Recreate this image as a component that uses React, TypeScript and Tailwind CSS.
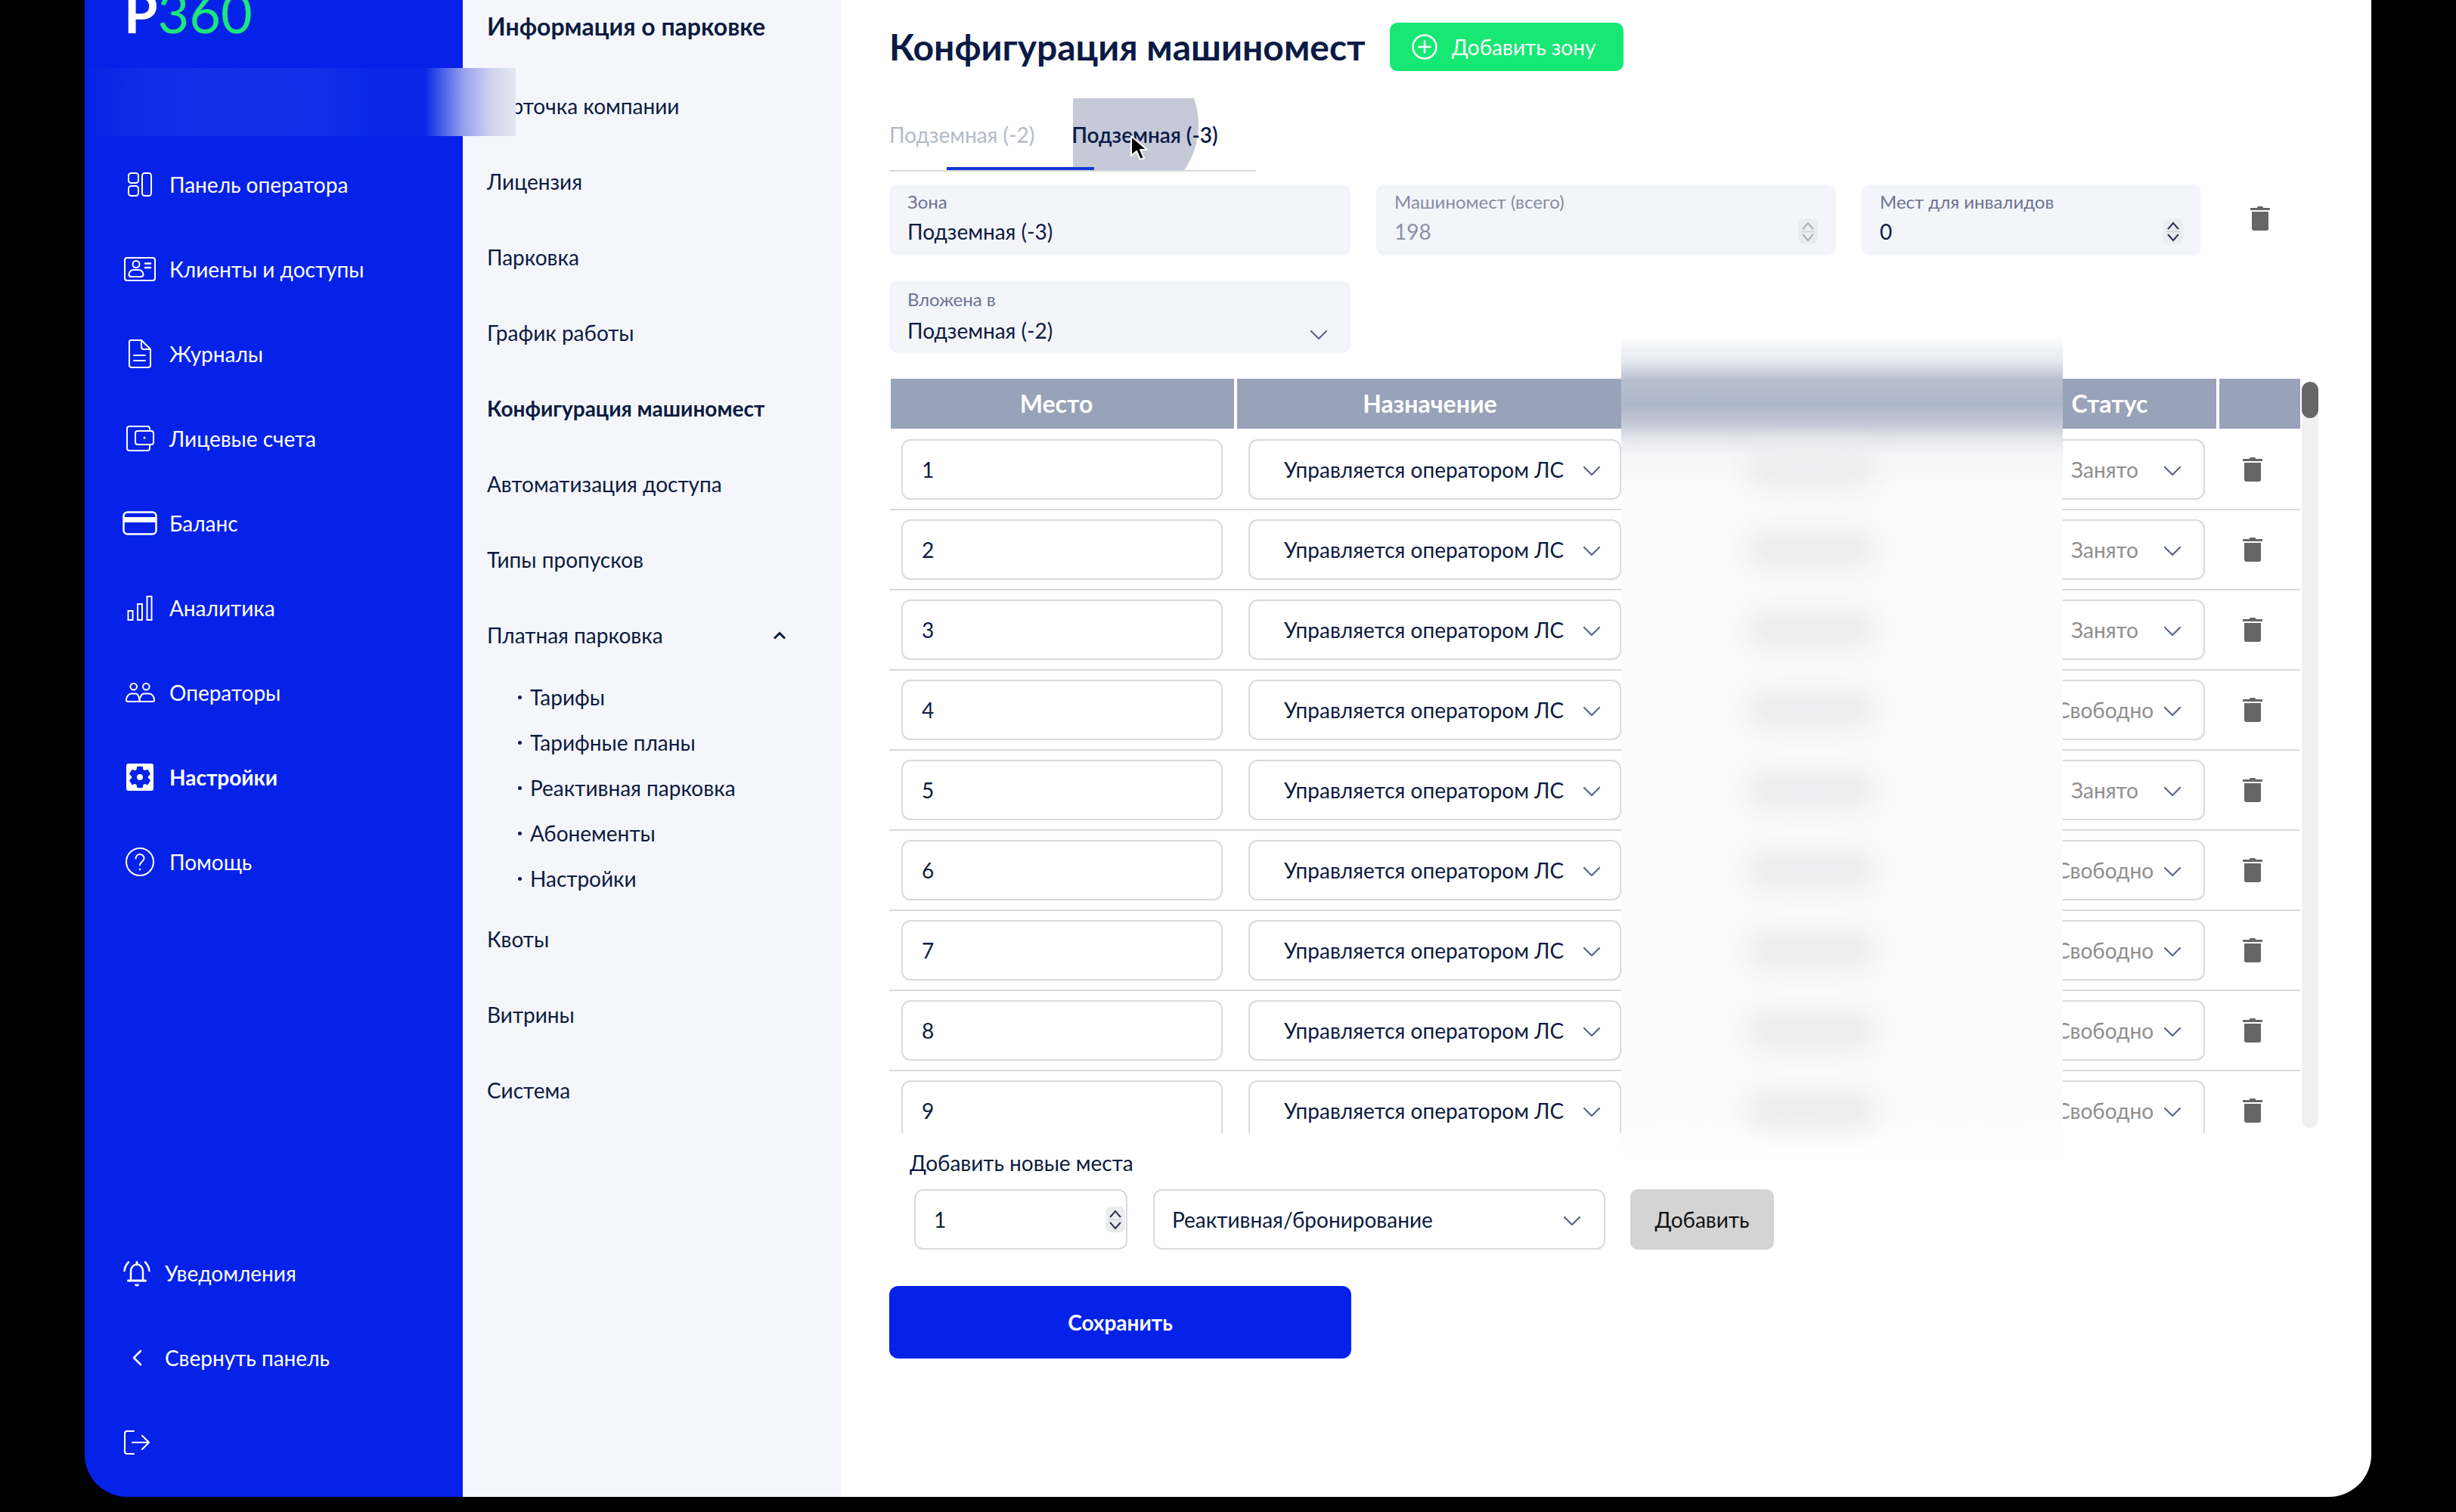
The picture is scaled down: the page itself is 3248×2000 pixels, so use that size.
import React from 'react';

// six blunt teeth, flat one on top
const gearPoints = () => {
    const pts: string[] = [];
    for (let i = 0; i < 6; i++) {
        const a = (-90 + i * 60) * (Math.PI / 180);
        const at = (r: number, d: number) => {
            const t = a + d * (Math.PI / 180);
            return `${(18 + r * Math.cos(t)).toFixed(2)},${(18 + r * Math.sin(t)).toFixed(2)}`;
        };
        pts.push(at(10, -21), at(13.5, -12), at(13.5, 12), at(10, 21));
    }
    return pts.join(' ');
};

const NavIcon = ({ name }: { name: string }) => {
    const p = { fill: 'none', stroke: 'white', strokeWidth: 2, strokeLinecap: 'round' as const, strokeLinejoin: 'round' as const };
    switch (name) {
        case 'panel':
            return (
                <svg width="32" height="32" viewBox="0 0 32 32" {...p}>
                    <rect x="1" y="1" width="13" height="13" rx="3.5" />
                    <rect x="1" y="18" width="13" height="13" rx="3.5" />
                    <rect x="19" y="1" width="12" height="30" rx="3.5" />
                </svg>
            );
        case 'clients':
            return (
                <svg width="42" height="32" viewBox="0 0 42 32" {...p}>
                    <rect x="1" y="1" width="40" height="30" rx="3" />
                    <circle cx="16" cy="9.500" r="4.500" />
                    <path d="M6.500 23c0-3.500 3-6 6-6h7c3 0 6 2.500 6 6 0 1.700-1.300 3-3 3h-13c-1.700 0-3-1.300-3-3z" />
                    <path d="M28 8.500h7M28 14h7" strokeWidth={2.500} />
                </svg>
            );
        case 'journals':
            return (
                <svg width="30" height="38" viewBox="0 0 30 38" {...p}>
                    <path d="M3 1h14l12 12v21c0 1.700-1.300 3-3 3H4c-1.700 0-3-1.300-3-3V3c0-1.100.9-2 2-2z" />
                    <path d="M17 1v9c0 1.700 1.300 3 3 3h9" />
                    <path d="M7 21h15M7 28h15" />
                </svg>
            );
        case 'accounts':
            return (
                <svg width="37" height="34" viewBox="0 0 37 34" {...p}>
                    <path d="M31 7V4c0-1.700-1.300-3-3-3H4C2.300 1 1 2.300 1 4v26c0 1.700 1.300 3 3 3h24c1.700 0 3-1.300 3-3v-5" />
                    <path d="M15 7h18c1.700 0 3 1.300 3 3v12c0 1.700-1.300 3-3 3H15c-1.700 0-3-1.300-3-3V10c0-1.700 1.300-3 3-3z" />
                    <circle cx="24" cy="16" r="1.500" fill="white" stroke="none" />
                </svg>
            );
        case 'balance':
            return (
                <svg width="46" height="32" viewBox="0 0 46 32" {...p} strokeWidth={2.5}>
                    <rect x="1.500" y="1.500" width="43" height="29" rx="5" />
                    <rect x="1.500" y="8" width="43" height="7" fill="white" stroke="none" />
                </svg>
            );
        case 'analytics':
            return (
                <svg width="34" height="33" viewBox="0 0 34 33" {...p} strokeLinejoin="miter">
                    <rect x="1.500" y="20" width="6" height="12" />
                    <rect x="14" y="11" width="6" height="21" />
                    <rect x="26.500" y="1" width="6" height="31" />
                </svg>
            );
        case 'operators':
            return (
                <svg width="39" height="26" viewBox="0 0 39 26" {...p}>
                    <circle cx="10.700" cy="5.300" r="4.300" />
                    <circle cx="27.300" cy="5.300" r="4.300" />
                    <path d="M18.500 25H3a2 2 0 0 1-2-2c0-4.500 3-8.500 7-8.500h5c3 0 5.500 4 5.500 10.500z" />
                    <path d="M18.500 25H36a2 2 0 0 0 2-2c0-4.500-3-8.500-7-8.500h-6c-3.500 0-6.500 4-6.500 10.500z" />
                </svg>
            );
        case 'settings':
            return (
                <svg width="36" height="36" viewBox="0 0 36 36">
                    <rect width="36" height="36" rx="3" fill="white" />
                    <polygon points={gearPoints()} fill="#0622E8" stroke="#0622E8" strokeWidth="2" strokeLinejoin="round" />
                    <circle cx="18" cy="18" r="4" fill="white" />
                </svg>
            );
        case 'help':
            return (
                <svg width="38" height="38" viewBox="0 0 38 38" {...p}>
                    <circle cx="19" cy="19" r="18" />
                    <path d="M13.500 14.500c0-3 2.500-5.500 5.500-5.500s5.500 2.300 5.500 5.200c0 4.300-5.500 4.800-5.500 9.300" />
                    <circle cx="19" cy="29" r="1.300" fill="white" stroke="none" />
                </svg>
            );
        case 'bell':
            return (
                <svg width="36" height="35" viewBox="0 0 36 35" {...p} strokeWidth={2.5}>
                    <path d="M10 26V14c0-4.500 3.500-8.500 8-8.500s8 4 8 8.500v12" />
                    <path d="M18 2.500v3" strokeWidth={3} />
                    <path d="M6.500 27h23" strokeWidth={3} />
                    <path d="M1.500 14c.5-5 2.500-8.500 5.500-11.500M34.500 14c-.5-5-2.500-8.500-5.500-11.500" />
                    <path d="M15 31.500h6a3 3 0 0 1-6 0z" fill="white" stroke="none" />
                </svg>
            );
        case 'back':
            return (
                <svg width="16" height="22" viewBox="0 0 16 22" {...p} strokeWidth={2.5}>
                    <path d="M13 2 4 11l9 9" />
                </svg>
            );
        case 'logout':
        default:
            return (
                <svg width="35" height="32" viewBox="0 0 35 32" {...p}>
                    <path d="M13 1H4C2.300 1 1 2.300 1 4v24c0 1.700 1.300 3 3 3h9" />
                    <path d="M11 16h22M24 7l9 9-9 9" />
                </svg>
            );
    }
};

const Chevron = ({ color = '#5B6585', w = 24 }: { color?: string; w?: number }) => (
    <svg width={w} height="14" viewBox="0 0 24 14" fill="none" stroke={color} strokeWidth="2.200" strokeLinecap="round" strokeLinejoin="round">
        <path d="M2 2l10 10L22 2" />
    </svg>
);

const Spin = ({ color }: { color: string }) => (
    <div className="flex h-[34px] w-[26px] flex-col items-center justify-center gap-[2px] rounded-[8px] bg-[#EBECF0]">
        <svg width="18" height="11" viewBox="0 0 18 11" fill="none" stroke={color} strokeWidth="2" strokeLinecap="round">
            <path d="M2.500 9.500 9 2l6.500 7.500" />
        </svg>
        <div className="h-[1px] w-[18px] bg-[#C9CCD6]" />
        <svg width="18" height="11" viewBox="0 0 18 11" fill="none" stroke={color} strokeWidth="2" strokeLinecap="round">
            <path d="M2.500 1.500 9 9l6.500-7.500" />
        </svg>
    </div>
);

const Trash = () => (
    <svg width="26" height="32" viewBox="0 0 26 32" fill="#666666">
        <path d="M9 1.500C9 .7 9.700 0 10.500 0h5c.8 0 1.500.7 1.500 1.500V2h8c.6 0 1 .4 1 1v1c0 .6-.4 1-1 1H1c-.6 0-1-.4-1-1V3c0-.6.4-1 1-1h8z" />
        <path d="M2 7h22v22.500c0 1.400-1.100 2.500-2.500 2.500h-17C3.100 32 2 30.900 2 29.500z" />
    </svg>
);

const mainNav = [
    { icon: 'panel', label: 'Панель оператора' },
    { icon: 'clients', label: 'Клиенты и доступы' },
    { icon: 'journals', label: 'Журналы' },
    { icon: 'accounts', label: 'Лицевые счета' },
    { icon: 'balance', label: 'Баланс' },
    { icon: 'analytics', label: 'Аналитика' },
    { icon: 'operators', label: 'Операторы' },
    { icon: 'settings', label: 'Настройки', active: true },
    { icon: 'help', label: 'Помощь' },
];

const subMenu = ['Тарифы', 'Тарифные планы', 'Реактивная парковка', 'Абонементы', 'Настройки'];

const rows = [
    { n: 1, status: 'Занято' },
    { n: 2, status: 'Занято' },
    { n: 3, status: 'Занято' },
    { n: 4, status: 'Свободно' },
    { n: 5, status: 'Занято' },
    { n: 6, status: 'Свободно' },
    { n: 7, status: 'Свободно' },
    { n: 8, status: 'Свободно' },
    { n: 9, status: 'Свободно' },
];

const Sidebar = () => (
    <aside className="flex h-full w-[500px] shrink-0 flex-col overflow-hidden bg-[#0622E8] text-[28px] text-white">
        <div className="h-[188px] pl-[52px]">
            <div className="-mt-[29px] text-[72px] leading-[90px]">
                <span className="font-bold text-white">P</span>
                <span className="text-[#1CE67C]">360</span>
            </div>
        </div>
        {mainNav.map((item) => (
            <div key={item.label} className="flex h-[112px] items-center pl-[50px]">
                <div className="flex w-[46px] justify-center">
                    <NavIcon name={item.icon} />
                </div>
                <span className={`ml-[16px] ${item.active ? 'font-bold' : ''}`}>{item.label}</span>
            </div>
        ))}
        <div className="mt-auto pb-[16px]">
            {[
                { icon: 'bell', label: 'Уведомления' },
                { icon: 'back', label: 'Свернуть панель' },
                { icon: 'logout', label: '' },
            ].map((item) => (
                <div key={item.icon} className="flex h-[112px] items-center pl-[50px]">
                    <div className="flex w-[38px] justify-center">
                        <NavIcon name={item.icon} />
                    </div>
                    <span className="ml-[18px]">{item.label}</span>
                </div>
            ))}
        </div>
    </aside>
);

const SubNav = () => (
    <nav className="h-full w-[500px] shrink-0 bg-[#F4F6FC] pl-[32px] pr-[64px] text-[28px] text-[#0D1B3F]">
        <div className="mb-[20px] flex h-[70px] items-center text-[32px] font-bold">Информация о парковке</div>
        {['Карточка компании', 'Лицензия', 'Парковка', 'График работы'].map((t) => (
            <div key={t} className="flex h-[100px] items-center">{t}</div>
        ))}
        <div className="flex h-[100px] items-center font-bold">Конфигурация машиномест</div>
        {['Автоматизация доступа', 'Типы пропусков'].map((t) => (
            <div key={t} className="flex h-[100px] items-center">{t}</div>
        ))}
        <div className="flex h-[100px] items-center justify-between">
            <span>Платная парковка</span>
            <svg width="18" height="11" viewBox="0 0 18 11" fill="none" stroke="#0D1B3F" strokeWidth="3" className="mr-[8px]">
                <path d="M2 9.500l7-7 7 7" />
            </svg>
        </div>
        <div className="pt-[2px]">
            {subMenu.map((t) => (
                <div key={t} className="flex h-[60px] items-center pl-[41px]">
                    <span className="mr-[11px] h-[5px] w-[5px] rounded-full bg-[#0D1B3F]" />
                    {t}
                </div>
            ))}
        </div>
        {['Квоты', 'Витрины', 'Система'].map((t) => (
            <div key={t} className="flex h-[100px] items-center">{t}</div>
        ))}
    </nav>
);

const Field = ({ label, value, width, disabled, spin, chevron, tall }: { label: string; value: string; width: string; disabled?: boolean; spin?: boolean; chevron?: boolean; tall?: boolean }) => (
    <div className={`relative flex shrink-0 flex-col rounded-[12px] bg-[#F3F5FB] pl-[24px] ${width} ${tall ? 'h-[96px] pt-[8px]' : 'h-[94px] pt-[6px]'}`}>
        <span className={`text-[24px] leading-[34px] ${disabled ? 'text-[#858CA3]' : 'text-[#6B7391]'}`}>{label}</span>
        <span className={`${tall ? 'mt-[6px]' : 'mt-[4px]'} text-[28px] leading-[36px] ${disabled ? 'text-[#8C92A3]' : 'text-[#0D1B3F]'}`}>{value}</span>
        {spin && (
            <div className="absolute right-[24px] top-[45px]">
                <Spin color={disabled ? '#A9AEBB' : '#2A3350'} />
            </div>
        )}
        {chevron && (
            <div className="absolute right-[30px] top-[65px]">
                <Chevron />
            </div>
        )}
    </div>
);

const Row = ({ n, status }: { n: number; status: string }) => (
    <div className="flex h-[106px] shrink-0 items-center border-b-2 border-[#D9DADF] pl-[16px]">
        <div className="flex h-[80px] w-[425px] shrink-0 items-center rounded-[12px] border-2 border-[#D9DADF] pl-[25px]">{n}</div>
        <div className="ml-[34px] flex h-[80px] w-[493px] shrink-0 items-center justify-between rounded-[12px] border-2 border-[#D9DADF] pl-[45px] pr-[25px]">
            <span>Управляется оператором ЛС</span>
            <div className="mt-[3px] flex">
                <Chevron />
            </div>
        </div>
        <div className="ml-[520px] flex h-[80px] w-[252px] shrink-0 items-center rounded-[12px] border-2 border-[#D9DADF] pr-[29px]">
            <span className="flex-1 pl-[40px] text-center text-[#8E8E8E]">{status}</span>
            <div className="mt-[3px] flex">
                <Chevron />
            </div>
        </div>
        <div className="ml-[50px] flex">
            <Trash />
        </div>
    </div>
);

const SeatsTable = () => (
    <div className="mt-[34px] flex h-[998px] w-[1890px]">
        <div className="flex w-[1866px] flex-col overflow-hidden text-[28px] text-[#0D1B3F]">
            <div className="ml-[2px] flex h-[66px] shrink-0 gap-[4px] text-[32px] font-bold text-white">
                <div className="flex w-[454px] items-center justify-center bg-[#98A2B9] pr-[16px]">Место</div>
                <div className="flex w-[510px] items-center justify-center bg-[#98A2B9]">Назначение</div>
                <div className="w-[495px] bg-[#98A2B9]" />
                <div className="flex w-[282px] items-center justify-center bg-[#98A2B9]">Статус</div>
                <div className="w-[107px] bg-[#98A2B9]" />
            </div>
            <div className="shrink-0 pt-[2px]">
                {rows.map((r) => (
                    <Row key={r.n} n={r.n} status={r.status} />
                ))}
            </div>
        </div>
        <div className="ml-[2px] mt-[4px] h-[987px] w-[22px] rounded-full bg-[#F0F0F0]">
            <div className="h-[48px] w-[22px] rounded-full bg-[#666666]" />
        </div>
    </div>
);

const Main = () => (
    <main className="relative h-full min-w-0 flex-1 bg-white pl-[64px]">
        <div className="flex items-center pt-[30px]">
            <h1 className="text-[48px] font-bold leading-[64px] text-[#0A1A44]">Конфигурация машиномест</h1>
            <button className="ml-[32px] flex h-[64px] w-[309px] items-center rounded-[10px] bg-[#16E873] pl-[29px] text-[28px] text-white">
                <svg width="34" height="34" viewBox="0 0 34 34" fill="none" stroke="white" strokeWidth="2.500" strokeLinecap="round">
                    <circle cx="17" cy="17" r="15.500" />
                    <path d="M17 9.500v15M9.500 17h15" />
                </svg>
                <span className="ml-[19px]">Добавить зону</span>
            </button>
        </div>

        <div className="relative mt-[36px] flex h-[97px] w-[485px] items-center border-b-2 border-[#D9DADF] text-[28px]">
            <div className="absolute left-[243px] top-0 h-[95px] w-[170px] overflow-hidden">
                <div className="absolute -left-[44px] -top-[70px] h-[210px] w-[210px] rounded-full bg-[#C5C9D8]" />
            </div>
            <div className="absolute bottom-0 left-[76px] h-[4px] w-[195px] bg-[#1238D4]" />
            <span className="relative text-[#B4BAC8]">Подземная (-2)</span>
            <span className="relative ml-[49px] font-semibold text-[#0A1A44]">Подземная (-3)</span>
            <svg width="24" height="36" viewBox="0 0 24 36" className="absolute left-[318px] top-[48px]">
                <path d="M2 2v26l7-6 5 11 5-2-5-11h9z" fill="black" stroke="white" strokeWidth="2" strokeLinejoin="round" />
            </svg>
        </div>

        <div className="mt-[17px] flex items-start gap-[34px]">
            <Field label="Зона" value="Подземная (-3)" width="w-[610px]" />
            <Field label="Машиномест (всего)" value="198" width="w-[608px]" disabled spin />
            <Field label="Мест для инвалидов" value="0" width="w-[449px]" spin />
            <div className="ml-[31px] mt-[29px] flex">
                <Trash />
            </div>
        </div>
        <div className="mt-[33px]">
            <Field label="Вложена в" value="Подземная (-2)" width="w-[610px]" chevron tall />
        </div>

        <SeatsTable />

        <div className="mt-[19px] pl-[27px] text-[28px] leading-[40px] text-[#0D1B3F]">Добавить новые места</div>
        <div className="mt-[15px] flex items-center pl-[33px] text-[28px] text-[#0D1B3F]">
            <div className="flex h-[80px] w-[282px] items-center justify-between rounded-[12px] border-2 border-[#D9DADF] pl-[24px] pr-[1px]">
                <span>1</span>
                <Spin color="#2A3350" />
            </div>
            <div className="ml-[34px] flex h-[80px] w-[598px] items-center justify-between rounded-[12px] border-2 border-[#D9DADF] pl-[23px] pr-[30px]">
                <span>Реактивная/бронирование</span>
                <div className="mt-[3px] flex">
                    <Chevron />
                </div>
            </div>
            <button className="ml-[33px] h-[80px] w-[190px] rounded-[10px] bg-[#D4D4D4] text-[#111111]">Добавить</button>
        </div>
        <button className="mt-[48px] h-[96px] w-[611px] rounded-[12px] bg-[#0622E8] text-[28px] font-bold text-white">Сохранить</button>

        {/* redacted column */}
        <div className="absolute left-[1032px] top-[443px] flex h-[1090px] w-[584px] flex-col items-center gap-[56px] overflow-hidden bg-[linear-gradient(180deg,#ffffff_0px,#e6e9ef_34px,#b8bfd0_60px,#aeb6cb_92px,#c5cad8_119px,#e5e6ec_137px,#f6f6f7_159px,#fbfbfb_200px,#fbfbfb_1030px,#ffffff_1090px)] pr-[82px] pt-[153px]">
            {rows.map((r) => (
                <div key={r.n} className="h-[50px] w-[170px] shrink-0 rounded-full bg-[#EBEBED] blur-[16px]" />
            ))}
        </div>
    </main>
);

export default function App() {
    return (
        <div className="h-[2000px] w-[3248px] overflow-hidden bg-black px-[112px] font-['Lato','Noto_Sans',sans-serif]">
            <div className="relative flex h-[1980px] overflow-hidden rounded-b-[56px]">
                <Sidebar />
                <SubNav />
                <Main />
                {/* redacted company name */}
                <div className="absolute left-0 top-[90px] h-[90px] w-[570px] bg-[linear-gradient(90deg,#0622e8_0px,#0e2be7_60px,#1331e6_180px,#1230e7_300px,#0a27e8_380px,#0a27e8_450px,#5a6fe9_480px,#94a0ec_500px,#d2d6f0_540px,#e3e5f0_570px)]" />
            </div>
        </div>
    );
}
